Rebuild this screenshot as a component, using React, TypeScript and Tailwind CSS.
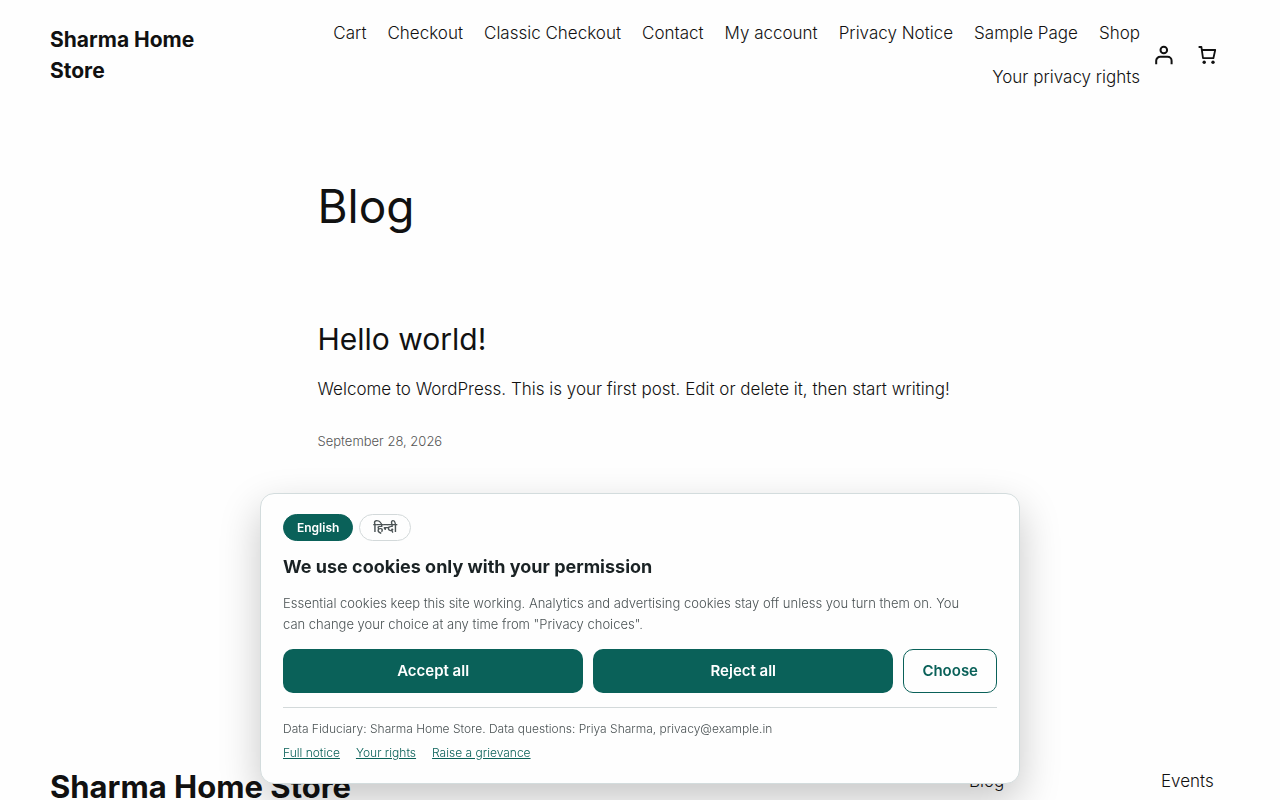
import { useState } from 'react';
import clsx from 'clsx';

const NAV = [
  'Cart',
  'Checkout',
  'Classic Checkout',
  'Contact',
  'My account',
  'Privacy Notice',
  'Sample Page',
  'Shop',
  'Your privacy rights',
];

const LANGUAGES = [
  { code: 'en', label: 'English' },
  { code: 'hi', label: 'हिन्दी' },
];

const NOTICE_LINKS = ['Full notice', 'Your rights', 'Raise a grievance'];

function AccountIcon() {
  return (
    <svg viewBox="0 0 24 24" className="w-6 h-6" fill="none" stroke="currentColor" strokeWidth="2">
      <circle cx="11.8" cy="7" r="3.3" />
      <path d="M4.2 21.2v-3.4a4 4 0 0 1 4-4h7.4a4 4 0 0 1 4 4v3.4" />
    </svg>
  );
}

function CartIcon() {
  return (
    <svg viewBox="0 0 24 24" className="w-6 h-6" fill="none" stroke="currentColor">
      <path d="M2.6 4h2.8l1.6 11.2h10.4L19.2 7H5.9" strokeWidth="1.8" strokeLinejoin="round" />
      <circle cx="8.2" cy="19.2" r="1.7" fill="currentColor" stroke="none" />
      <circle cx="17" cy="19.2" r="1.7" fill="currentColor" stroke="none" />
    </svg>
  );
}

function Header() {
  return (
    <header className="flex items-center px-[50px] pt-[19px] pb-5">
      <a href="#" className="w-40 shrink-0 text-[21px] leading-[31px] font-bold">
        Sharma Home Store
      </a>
      <nav className="flex-1 flex flex-wrap justify-end gap-x-[21px] gap-y-4 pl-8">
        {NAV.map((label) => (
          <a key={label} href="#" className="text-[17px] leading-7 font-light hover:underline">
            {label}
          </a>
        ))}
      </nav>
      <div className="flex items-center ml-3 mr-2.5 gap-5">
        <a href="#" aria-label="My account">
          <AccountIcon />
        </a>
        <button type="button" aria-label="Cart">
          <CartIcon />
        </button>
      </div>
    </header>
  );
}

function CookieBanner() {
  const [language, setLanguage] = useState('en');

  return (
    <section
      aria-label="Cookie consent"
      className="fixed inset-x-4 bottom-4 mx-auto max-w-[760px] rounded-[14px] border border-[#d3dcdd] bg-[#fefefe] px-[22px] pt-5 pb-[21px] text-[#1a2224] shadow-[0_16px_40px_rgba(0,0,0,0.22)]"
    >
      <div className="flex gap-1.5">
        {LANGUAGES.map(({ code, label }) => (
          <button
            key={code}
            type="button"
            onClick={() => setLanguage(code)}
            className={clsx(
              'h-[27px] px-[13px] rounded-full border text-xs font-semibold',
              language === code
                ? 'border-[#0a6159] bg-[#0a6159] text-white'
                : 'border-[#d3d9da] text-[#4a5254]'
            )}
          >
            {label}
          </button>
        ))}
      </div>

      <h2 className="mt-3 text-lg leading-7 font-bold">We use cookies only with your permission</h2>
      <p className="mt-3 pr-5 text-[13px] leading-[21px] font-light text-[#4a5254]">
        Essential cookies keep this site working. Analytics and advertising cookies stay off unless you
        turn them on. You can change your choice at any time from "Privacy choices".
      </p>

      <div className="mt-3.5 flex gap-2.5 text-[15px] font-semibold">
        <button type="button" className="flex-1 h-11 rounded-[10px] bg-[#0a6159] text-white">
          Accept all
        </button>
        <button type="button" className="flex-1 h-11 rounded-[10px] bg-[#0a6159] text-white">
          Reject all
        </button>
        <button
          type="button"
          className="h-11 px-[18px] rounded-[10px] border border-[#0a6159] text-[#0a6159]"
        >
          Choose
        </button>
      </div>

      <div className="mt-3.5 border-t border-[#d3d9da] pt-3 text-xs leading-[18px] font-light">
        <p className="text-[#4a5254]">
          Data Fiduciary: Sharma Home Store. Data questions: Priya Sharma, privacy@example.in
        </p>
        <div className="mt-1.5 flex gap-4">
          {NOTICE_LINKS.map((label) => (
            <a key={label} href="#" className="text-[#0a6159] underline">
              {label}
            </a>
          ))}
        </div>
      </div>
    </section>
  );
}

export default function App() {
  return (
    <div className="min-h-screen bg-[#fefefe] text-[#111111] font-['Inter','Noto_Sans',sans-serif]">
      <Header />

      <main className="mx-auto max-w-[645px] pt-[67px]">
        <h1 className="text-[46px] leading-[56px]">Blog</h1>
        <article className="mt-[85px]">
          <h2 className="text-3xl leading-10">
            <a href="#">Hello world!</a>
          </h2>
          <p className="mt-4 text-[17px] leading-7 font-light">
            Welcome to WordPress. This is your first post. Edit or delete it, then start writing!
          </p>
          <p className="mt-7 text-[13px] leading-5 font-light text-[#555555]">
            <a href="#">September 28, 2026</a>
          </p>
        </article>
      </main>

      <footer className="mt-[316px] flex justify-between px-[50px] pb-16">
        <p className="text-[31px] leading-10 font-bold">Sharma Home Store</p>
        <nav className="grid grid-cols-[192px_69px] text-[17px] leading-7 font-light">
          <a href="#">Blog</a>
          <a href="#">Events</a>
        </nav>
      </footer>

      <CookieBanner />
    </div>
  );
}
